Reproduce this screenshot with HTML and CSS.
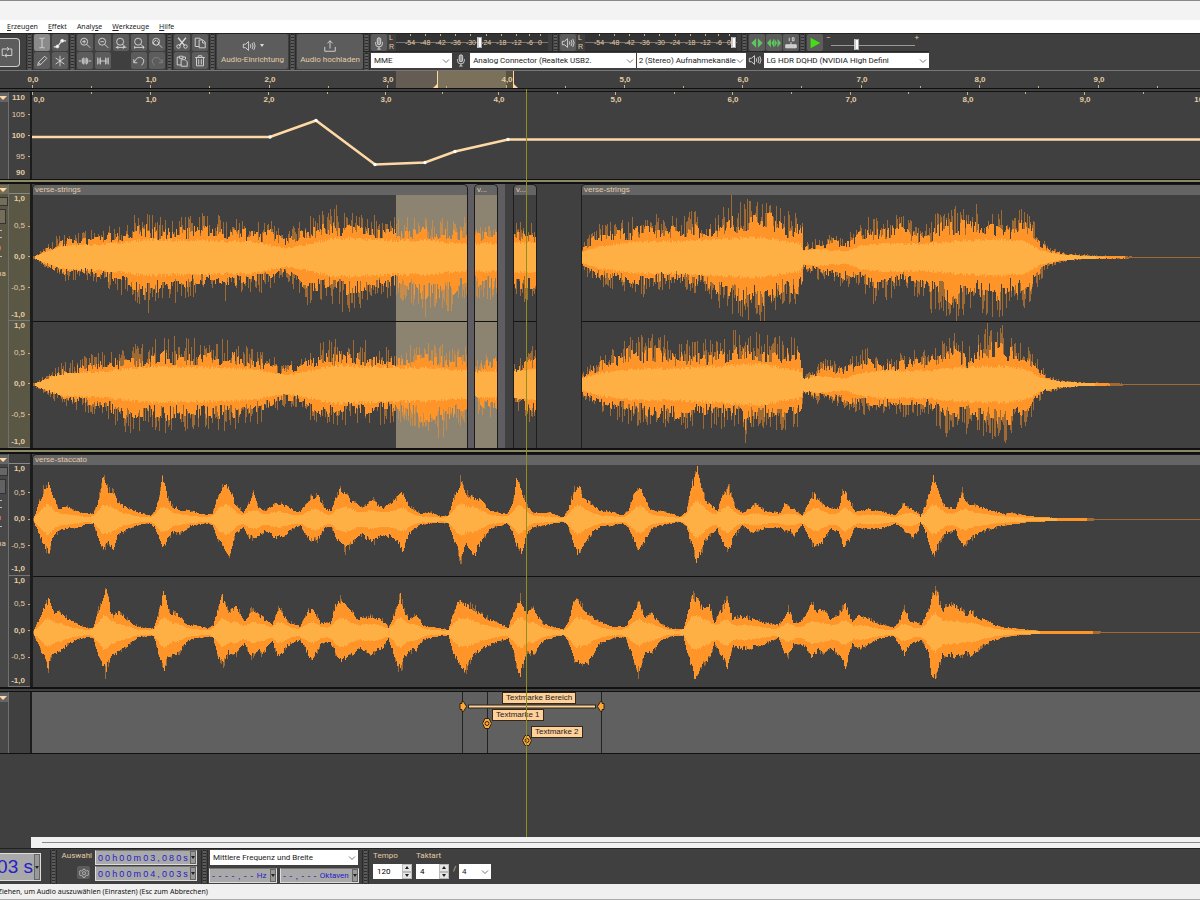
FILE: index.html
```html
<!DOCTYPE html>
<html lang="de">
<head>
<meta charset="utf-8">
<title>Audio-Editor</title>
<link rel="stylesheet" href="styles.css">
</head>
<body>
<svg class="symbols" aria-hidden="true">
  <symbol id="mic" viewBox="0 0 16 16"><rect x="6" y="2" width="4" height="8" rx="2" fill="#999"/><path d="M4 7v1.500a4 4 0 0 0 8 0V7M8 12.500V15M6 15h4"/></symbol>
  <symbol id="speaker" viewBox="0 0 16 16"><path d="M1.500 6h2.500l3.500-3v10l-3.500-3H1.500zM9.500 6q1.300 2 0 4M11.500 4.500q2.300 3.500 0 7M13.500 3.500q3 4.500 0 9"/></symbol>
  <symbol id="chevron" viewBox="0 0 8 8"><path d="M1 2.500 4 5.500 7 2.500"/></symbol>
  <symbol id="zoom" viewBox="0 0 16 16"><circle cx="7" cy="6.500" r="4"/><path d="m10 9.500 4 4"/></symbol>
</svg>
<header class="titlebar"></header>
<nav class="menu">
  <a href="#"><u>E</u>rzeugen</a><a href="#"><u>E</u>ffekt</a><a href="#">Analy<u>s</u>e</a><a href="#"><u>W</u>erkzeuge</a><a href="#"><u>H</u>ilfe</a>
</nav>

<section class="toolbar" aria-label="Werkzeugleisten">
  <div class="loopbox"><button class="loop" aria-label="Schleife"><svg viewBox="0 0 16 16"><path d="M5 12H2.500V4.500H10M8 2.500l2.500 2L8 6.500M11 4.500h2.500V12H6M8 10l-2.500 2L8 14"/></svg></button></div>
  <i class="grip"></i>
  <div class="tools">
    <button class="on" aria-label="Auswahl"><svg viewBox="0 0 16 16"><path d="M5 2.500h2l1 1 1-1h2M8 3.500v9M5 13.500h2l1-1 1 1h2"/></svg></button>
    <button aria-label="Hüllkurve"><svg viewBox="0 0 16 16"><path d="M1 12.500h4l5-7h5" stroke-width="1.500"/><circle cx="5" cy="12" r="1.700" fill="#fff"/><circle cx="10.500" cy="5.500" r="1.700" fill="#fff"/></svg></button>
    <button aria-label="Zeichnen"><svg viewBox="0 0 16 16"><path d="m3 13 1-3.500L11 2.500l2.500 2.500-7 7zM4 9.500 6.500 12"/></svg></button>
    <button aria-label="Multi"><svg viewBox="0 0 16 16"><path d="M8 2v12M3 4.500l10 7M13 4.500l-10 7"/></svg></button>
  </div>
  <i class="grip"></i>
  <div class="edit">
    <button aria-label="Vergrößern"><svg><use href="#zoom"/></svg><svg class="mark" viewBox="0 0 16 16"><path d="M5 6.500h4M7 4.500v4"/></svg></button>
    <button aria-label="Verkleinern"><svg><use href="#zoom"/></svg><svg class="mark" viewBox="0 0 16 16"><path d="M5 6.500h4"/></svg></button>
    <button aria-label="Auswahl anpassen"><svg><use href="#zoom"/></svg><svg class="mark" viewBox="0 0 16 16"><path d="M2 13h11M5 11.500 3 13l2 1.500M10 11.500l2 1.500-2 1.500"/></svg></button>
    <button aria-label="Projekt anpassen"><svg><use href="#zoom"/></svg><svg class="mark" viewBox="0 0 16 16"><path d="M3 13h10M3 11.500v3M13 11.500v3"/></svg></button>
    <button aria-label="Zoom umschalten"><svg><use href="#zoom"/></svg><svg class="mark" viewBox="0 0 16 16"><path d="M7 4.500 3 8l3 2M8 5l2 3-2 3"/></svg></button>
    <button aria-label="Zuschneiden"><svg viewBox="0 0 16 16"><path d="M1 8h3M5 5v6M6.500 4v8M8 5v6M9.500 4v8M11 5v6M12 8h3"/></svg></button>
    <button aria-label="Stille"><svg viewBox="0 0 16 16"><path d="M2 4v8M3.500 5v6M5 4v8M5 8h6M11 4v8M12.500 5v6M14 4v8"/></svg></button>
    <span></span>
    <button aria-label="Rückgängig"><svg viewBox="0 0 16 16"><path d="M2 6v4h4M2.500 9.500Q6 2 11 4.500T11 13"/></svg></button>
    <button aria-label="Wiederholen" disabled><svg viewBox="0 0 16 16"><path d="M14 6v4h-4M13.500 9.500Q10 2 5 4.500T5 13"/></svg></button>
  </div>
  <i class="grip"></i>
  <div class="tools">
    <button aria-label="Ausschneiden"><svg viewBox="0 0 16 16"><path d="M3.500 2 11 11M12.500 2 5 11" stroke-width="1.500"/><circle cx="4" cy="12" r="2"/><circle cx="12" cy="12" r="2"/></svg></button>
    <button aria-label="Kopieren"><svg viewBox="0 0 16 16"><path d="M7 12H2.500V2.500H8l2 2M7 4.500h4.500l2.500 2.500v6.500H7zM11 5v3h3"/></svg></button>
    <button aria-label="Einfügen"><svg viewBox="0 0 16 16"><path d="M7 12.500H2.500v-9H5M9 3.500h3V6M5 2.500h4v2.500H5zM7 6.500h4.500L14 9v5H7z"/></svg></button>
    <button aria-label="Löschen"><svg viewBox="0 0 16 16"><path d="M2.500 4h11M6 3.500V2h4v1.500M4 4v9.500h8V4M6.500 6v6M9.500 6v6"/></svg></button>
  </div>
  <i class="grip"></i>
  <button class="big setup"><span class="bigicon"><svg><use href="#speaker"/></svg><b class="tri"></b></span>Audio-Einrichtung</button>
  <i class="grip"></i>
  <button class="big upload"><span class="bigicon"><svg viewBox="0 0 16 16"><path d="M2 9v5h12V9M8 11V2M5 5l3-3 3 3"/></svg></span>Audio hochladen</button>
  <div class="stack">
    <div class="line">
      <i class="grip"></i>
      <button aria-label="Aufnahmepegel"><svg><use href="#mic"/></svg></button>
      <div class="lr"><span>L</span><span>R</span></div>
      <div class="meter"><span>-54</span><span>-48</span><span>-42</span><span>-36</span><span>-30</span><span>-24</span><span>-18</span><span>-12</span><span>-6</span><span>0</span><input type="range" aria-label="Aufnahmelautstärke" min="0" max="100" value="55"></div>
      <i class="grip"></i>
      <button aria-label="Wiedergabepegel"><svg><use href="#speaker"/></svg></button>
      <div class="lr"><span>L</span><span>R</span></div>
      <div class="meter"><span>-54</span><span>-48</span><span>-42</span><span>-36</span><span>-30</span><span>-24</span><span>-18</span><span>-12</span><span>-6</span><span>0</span><input type="range" aria-label="Wiedergabelautstärke" min="0" max="100" value="99"></div>
      <i class="grip"></i>
      <div class="sync">
        <button aria-label="Clip strecken"><svg class="green" viewBox="0 0 16 16"><path d="M7 2.500v11L1.500 8zM9 2.500v11L14.500 8z"/></svg></button>
        <button aria-label="Tonhöhe"><svg class="green" viewBox="0 0 16 16"><path d="M4.500 3v10L0 8zM8 3v10L5 8zM8.500 3v10l3-5zM12 3v10l4-5z"/></svg></button>
        <button aria-label="Synchronisieren"><svg viewBox="0 0 16 16"><path d="M6 2v4M9.500 2h2v3.500h-2zM8 7v3"/><path d="M2 10h12v3.500H2z" fill="#ccc"/></svg></button>
      </div>
      <i class="grip"></i>
      <button aria-label="Abspielen"><svg class="play" viewBox="0 0 16 16"><path d="M3 2 14 8 3 14z"/></svg></button>
      <div class="speed"><span>−</span><input type="range" aria-label="Geschwindigkeit" min="0" max="100" value="30"><span>+</span></div>
    </div>
    <div class="line devices">
      <i class="grip"></i>
      <label class="combo host"><select aria-label="Audio-Host"><option>MME</option></select><svg><use href="#chevron"/></svg></label>
      <svg class="dev"><use href="#mic"/></svg>
      <label class="combo input"><select aria-label="Aufnahmegerät"><option>Analog Connector (Realtek USB2.</option></select><svg><use href="#chevron"/></svg></label>
      <label class="combo chan"><select aria-label="Aufnahmekanäle"><option>2 (Stereo) Aufnahmekanäle</option></select><svg><use href="#chevron"/></svg></label>
      <svg class="dev spk"><use href="#speaker"/></svg>
      <label class="combo output"><select aria-label="Wiedergabegerät"><option>LG HDR DQHD (NVIDIA High Defini</option></select><svg><use href="#chevron"/></svg></label>
    </div>
  </div>
</section>

<svg class="timeline" id="timeline"></svg>

<main class="tracks">
  <section class="track tempo">
    <div class="panel"><button class="drop" aria-label="Spurmenü"></button></div>
    <div class="ruler"><div class="scale"><b>110</b><span>105</span><b>100</b><span>95</span><b>90</b></div></div>
    <div class="lane"><svg class="fill" id="tempo"></svg></div>
  </section>
  <section class="track strings">
    <div class="panel"><button class="drop" aria-label="Spurmenü"></button><i class="bar"></i><i class="box"></i><i class="dash"></i><i class="dash"></i><i class="dot"></i><i class="dash"></i><span>na</span></div>
    <div class="ruler"><div class="head"></div>
      <div class="scale"><b>1,0</b><span>0,5</span><b>0,0</b><span>-0,5</span><b>-1,0</b></div>
      <div class="scale"><b>1,0</b><span>0,5</span><b>0,0</b><span>-0,5</span><b>-1,0</b></div></div>
    <div class="lane" id="strings"></div>
  </section>
  <section class="track staccato">
    <div class="panel"><button class="drop" aria-label="Spurmenü"></button><i class="bar"></i><i class="box"></i><i class="dash"></i><i class="dash"></i><i class="dot"></i><i class="dash"></i><span>na</span></div>
    <div class="ruler"><div class="head"></div>
      <div class="scale"><b>1,0</b><span>0,5</span><b>0,0</b><span>-0,5</span><b>-1,0</b></div>
      <div class="scale"><b>1,0</b><span>0,5</span><b>0,0</b><span>-0,5</span><b>-1,0</b></div></div>
    <div class="lane" id="staccato"></div>
  </section>
  <section class="track labels">
    <div class="panel"><button class="drop" aria-label="Spurmenü"></button></div>
    <div class="ruler"></div>
    <div class="lane">
      <svg class="fill">
        <path d="M430.500 0v62M455.500 0v62M569.500 0v62" stroke="#222"/>
        <path d="M436 14.500H564" stroke="#2a221a" stroke-width="4"/><path d="M437 14.500H563" stroke="#ffd298" stroke-width="2"/>
        <g fill="#ffa838" stroke="#33220f">
          <path d="M430 9.500h1.500l3 5-3 5H430v-2h-2v-6h2z"/><path d="M570 9.500h-1.500l-3 5 3 5h1.500v-2h2v-6h-2z"/>
          <path d="M453 26.500h4l2.500 5-2.500 5h-4l-2.500-5z"/><circle cx="455" cy="31.500" r="2"/>
          <path d="M493 43.500h4l2.500 5-2.500 5h-4l-2.500-5z"/><circle cx="495" cy="48.500" r="2"/>
        </g>
      </svg>
      <span class="tag t1">Textmarke Bereich</span><span class="tag t2">Textmarke 1</span><span class="tag t3">Textmarke 2</span>
    </div>
  </section>
  <i class="playhead"></i>
</main>

<div class="scroll"><i></i></div>

<footer class="bottom">
  <div class="clock">03 s<button class="tiny" aria-label="Zeitformat"><b class="tri"></b></button></div>
  <i class="grip"></i>
  <div class="sel"><span>Auswahl</span><button aria-label="Auswahloptionen"><svg viewBox="0 0 16 16"><path d="M6.500 2h3l.7 2 2 .9 2-.9 1.300 2.700L14 8l1.500 1.500-1.500 2.700-2-.4-1.800 1L9.500 15h-3l-.7-2.200-1.800-1-2 .4L.5 9.500 2 8 .5 6.500 2 3.900l2 1 1.800-.9z"/><circle cx="8" cy="8.300" r="2.500"/></svg></button></div>
  <div class="times">
    <div class="digits" data-text="00h00m03,080s"></div>
    <div class="digits" data-text="00h00m04,003s"></div>
  </div>
  <i class="grip"></i>
  <div class="freq">
    <label class="combo"><select aria-label="Spektralauswahl"><option>Mittlere Frequenz und Breite</option></select><svg><use href="#chevron"/></svg></label>
    <div class="pair">
      <div class="digits dim"><span>-</span><span>-</span><span>-</span><span>-</span><span>,</span><span>-</span><span>-</span><em>Hz</em><button class="tiny" aria-label="Format"><b class="tri"></b></button></div>
      <div class="digits dim"><span>-</span><span>-</span><span>,</span><span>-</span><span>-</span><span>-</span><em>Oktaven</em><button class="tiny" aria-label="Format"><b class="tri"></b></button></div>
    </div>
  </div>
  <i class="grip"></i>
  <div class="meterset">
    <label for="bpm">Tempo</label><label for="beats">Taktart</label><span></span><span></span>
    <div class="num"><input id="bpm" value="120"><span><button aria-label="mehr"><b class="tri up"></b></button><button aria-label="weniger"><b class="tri"></b></button></span></div>
    <div class="num"><input id="beats" value="4"><span><button aria-label="mehr"><b class="tri up"></b></button><button aria-label="weniger"><b class="tri"></b></button></span></div>
    <em>/</em>
    <label class="combo unit"><select aria-label="Notenwert"><option>4</option></select><svg><use href="#chevron"/></svg></label>
  </div>
</footer>
<div class="status"><p>Ziehen, um Audio auszuwählen (Einrasten) (Esc zum Abbrechen)</p></div>
<script src="app.js"></script>
</body>
</html>
```
FILE: styles.css
```css
* { box-sizing: border-box; }
body { margin: 0; min-height: 100vh; display: flex; flex-direction: column; background: #404040; font: 8px/10px Roboto, "Noto Sans", sans-serif; color: #111; overflow: hidden; }
button, input, select { font: inherit; margin: 0; padding: 0; border: 0; border-radius: 0; }
i, em { font-style: normal; }
svg { fill: none; stroke: #ddd; stroke-width: 1; display: block; }
.symbols { position: absolute; width: 0; height: 0; }
.titlebar { height: 20px; background: #f3f3f3; border-top: 1px solid #888; }
.menu { height: 13px; background: #fff; display: flex; gap: 10px; padding: 2px 7px; font: 7px/10px "Noto Sans", sans-serif; }
.menu a { color: #222; text-decoration: none; }

.toolbar { height: 37px; background: #3f3f3f; border-top: 1px solid #222; display: flex; overflow: hidden; }
.grip { flex: none; width: 7px; margin: 0 1px; border: solid #2b2b2b; border-width: 0 1px; background: repeating-linear-gradient(#2d2d2d 0 1px, #5b5b5b 1px 3px); box-shadow: inset 1px 0 #454545, inset -1px 0 #454545; }
.toolbar button { width: 16px; height: 17px; background: #5c5c5c; border-radius: 2px; display: grid; place-items: center; color: #e5cba4; }
.toolbar button svg { width: 14px; height: 14px; grid-area: 1 / 1; }
.toolbar .on { background: #8a8a8a; }
.loopbox { width: 25px; display: flex; align-items: center; }
.toolbar .loop { width: 20px; height: 29px; border: 1px solid #ccc; border-left: 0; border-radius: 0 4px 4px 0; justify-content: start; }
.tools, .edit { display: grid; grid-template-columns: 16px 16px; gap: 1px 2px; align-content: start; }
.edit { grid-template-columns: repeat(5, 16px); width: 88px; }
.toolbar button:disabled svg { opacity: .3; }
.toolbar .big { height: 35px; width: 71px; display: flex; flex-direction: column; justify-content: center; align-items: center; gap: 2px; }
.toolbar .upload { width: 66px; }
.bigicon { display: flex; align-items: center; gap: 4px; }
.tri { width: 0; height: 0; border: 2px solid transparent; border-top: 3px solid #ddd; border-bottom: 0; }
.stack { flex: 1; display: flex; flex-direction: column; }
.stack .grip { margin-left: 0; }
.line { height: 18px; display: flex; width: 566px; border-bottom: 1px solid #262626; }
.lr { width: 7px; margin-left: 2px; font: 7px/8px "Liberation Sans", sans-serif; color: #e5cba4; display: grid; }
.meter { position: relative; width: 152px; padding: 0 6px 0 9px; margin-right: 4px; display: flex; justify-content: space-between; align-items: center; background: linear-gradient(#777, #777) 0 8px / 100% 1px no-repeat, #343434; font: 7px/8px "Liberation Sans", sans-serif; color: #e5cba4; }
.meter span { background: linear-gradient(#c9b08c, #c9b08c) 50% 0 / 1px 2px no-repeat; line-height: 17px; }
input[type=range] { appearance: none; background: none; }
.meter input { position: absolute; left: 0; top: 3px; width: 100%; height: 11px; }
input[type=range]::-webkit-slider-thumb { appearance: none; width: 5px; height: 11px; background: #fff; border: 1px solid #aaa; border-left: 2px solid #ccc; }
.sync { display: flex; gap: 1px; }
.green { fill: #5fc55f; stroke: none; }
.play { fill: #45dd18; stroke: none; }
.speed { display: flex; margin-left: 3px; color: #e5cba4; line-height: 8px; }
.speed input { width: 84px; height: 15px; margin-top: 3px; background: linear-gradient(#999, #999) 0 8px / 100% 1px no-repeat; }
.combo { position: relative; display: block; height: 15px; background: #fff; }
.combo select { appearance: none; width: 100%; height: 100%; padding: 0 3px; background: none; color: #222; }
.combo svg { position: absolute; right: 2px; top: 4px; width: 8px; height: 8px; stroke: #777; pointer-events: none; }
.devices { padding-top: 1px; border: 0; align-items: start; }
.devices .grip { align-self: stretch; }
.host { width: 82px; }
.dev { width: 14px; height: 14px; margin: 0 2px; }
.input { width: 167px; margin-right: 1px; }
.chan { width: 110px; }
.chan select { padding: 0 2px; }
.output { width: 167px; }

.timeline { width: 100%; height: 19px; flex: none; background: #404040; border-top: 1px solid #777; border-bottom: 1px solid #111; }
svg text { stroke: none; fill: #e5cba4; font: bold 8px "Liberation Sans", sans-serif; text-anchor: middle; }
.tracks { position: relative; flex: 1; padding-top: 2px; background: #404040; overflow: hidden; }
.track { display: grid; grid-template-columns: 8px 24px 1fr; border-top: 1px solid #111; border-bottom: 2px solid #111; }
.panel { display: flex; flex-direction: column; background: #484848; overflow: hidden; color: #e5cba4; }
.drop { height: 9px; margin: 1px 0 3px; background: #656565; position: relative; }
.drop::after { content: ""; position: absolute; left: -1px; top: 3px; border: 4px solid transparent; border-top-color: #ffd9a5; border-bottom: 0; }
.bar { height: 9px; background: #666; border: 1px solid #333; border-left: 0; }
.box { height: 15px; margin-top: 3px; width: 6px; background: #626262; border: 1px solid #333; border-left: 0; }
.dash { width: 2px; height: 1px; background: #bbb; margin-top: 6px; }
.dot { width: 1px; height: 4px; background: #c65; margin-top: 8px; }
.panel span { margin: 12px 0 0 -3px; }
.ruler { display: flex; flex-direction: column; background: #404040; border-left: 1px solid #707070; border-right: 2px solid #1c1c1c; color: #e5cba4; font: 8px/10px "Liberation Sans", sans-serif; text-align: right; }
.head { height: 10px; border-bottom: 1px solid #888; }
.scale { flex: 1; display: grid; grid-template-rows: 10px 5fr 2fr 5fr 10px; align-items: center; border-bottom: 1px solid #777; }
.scale > * { padding-right: 5px; background: linear-gradient(#c9b08c, #c9b08c) 100% 50% / 2px 1px no-repeat; }
.scale > :first-child, .scale > :last-child { background: none; }
.lane { position: relative; overflow: hidden; background: #404040; }
.fill { width: 100%; height: 100%; }
.tempo { height: 89px; }
.tempo .scale { grid-template-rows: 12px 21px 21px 21px 12px; border: 0; }
.strings { height: 272px; border-top: 2px solid #8c8a65; border-bottom: 2px solid #8c8a65; background: #111; padding: 2px 0; }
.strings .panel, .strings .ruler { background: #5b5745; }
.strings .bar, .strings .box, .strings .drop { background: #746d5a; }
.staccato { height: 237px; border-top-width: 2px; }
.labels { height: 63px; margin-top: 2px; border-bottom-width: 1px; }
.labels .lane { background: #606060; }
.clip { position: absolute; top: 0; bottom: 0; border: 1px solid #1d1d1d; border-bottom: 0; border-radius: 5px 5px 0 0; background: #404040; display: flex; flex-direction: column; overflow: hidden; }
.clip h3 { margin: 0; padding-left: 2px; height: 10px; background: #656565; color: #e0c9a8; font: 8px/9px "Liberation Sans", sans-serif; white-space: nowrap; }
.clip svg { flex: 1; width: 100%; min-height: 0; position: relative; }
.clip svg + svg { border-top: 1px solid #111; }
.peak { stroke: #ff9428; stroke-opacity: .5; }
.body { stroke: #ff9428; }
.rms { stroke: #ffb045; }
.shade { position: absolute; top: 0; bottom: 0; background: #5f5d62; }
.clip .shade { top: 10px; background: #8c8470; }
.tag { position: absolute; padding: 0 3px; border: 1px solid #33281c; background: #ffd098; color: #222; font: 8px/10px "Liberation Sans", sans-serif; white-space: nowrap; }
.t1 { left: 470px; top: 0; }
.t2 { left: 460px; top: 17px; }
.t3 { left: 499px; top: 34px; }
.playhead { position: absolute; left: 526px; top: 0; bottom: 0; width: 1px; background: #8f8f20; }

.scroll { height: 11px; margin-left: 31px; padding: 5px 0 0 11px; background: #f1f1f1; }
.scroll i { display: block; height: 1px; background: #888; }
.bottom { height: 36px; display: flex; padding-top: 1px; background: #404040; border-top: 1px solid #222; color: #e5cba4; }
.clock { width: 41px; height: 28px; margin: 3px 8px 0 0; display: flex; justify-content: flex-end; align-items: center; gap: 1px; background: #a9a9a9; border: 1px solid #ddd; border-left: 0; color: #2520c8; font: 19px/26px "Liberation Sans", sans-serif; white-space: nowrap; }
.tiny { width: 6px; align-self: stretch; background: #999; border: 1px solid #666; display: grid; place-items: center; }
.tiny .tri, .num .tri { border-top-color: #222; }
.num .tri.up { border-top: 0; border-bottom: 3px solid #222; }
.sel { width: 34px; display: flex; flex-direction: column; align-items: flex-end; gap: 5px; margin-right: 3px; padding-top: 1px; white-space: nowrap; }
.sel button { width: 13px; height: 13px; margin-right: 2px; background: #5c5c5c; border-radius: 2px; display: grid; place-items: center; }
.sel svg { width: 10px; height: 10px; }
.times { display: grid; gap: 1px; margin-right: 3px; align-content: start; }
.digits { width: 102px; height: 15px; display: flex; align-items: center; justify-content: space-between; padding-left: 2px; background: #a9a9a9; border: 1px solid #ddd; border-top-color: #777; color: #2520c8; font: 9px/12px "Liberation Sans", sans-serif; }
.freq { width: 150px; display: grid; gap: 3px; align-content: start; margin-right: 2px; }
.freq .combo { margin: 0 1px; }
.pair { display: flex; gap: 3px; }
.pair .digits { width: 68px; }
.pair .digits + .digits { width: 79px; }
.digits em { font: 8px/12px Roboto, sans-serif; }
.meterset { display: grid; grid-template-columns: 39px 33px 2px 32px; column-gap: 4px; row-gap: 2px; align-content: start; padding-left: 3px; }
.meterset > label:not(.combo) { line-height: 12px; }
.num { display: flex; height: 15px; background: #fff; }
.num input { min-width: 0; flex: 1; padding-left: 4px; }
.num span { display: grid; width: 10px; }
.num button { display: grid; place-items: center; background: #e6e6e6; border: 1px solid #bbb; }
.status { height: 16px; padding: 3px 0; background: #f0f0f0; border-bottom: 1px solid #aaa; font: 7px/10px "Noto Sans", sans-serif; }
.status p { margin: 0 0 0 -2px; }
```
FILE: app.js
```js
const ORIGIN = 32;
const WIDTH = Math.max(document.documentElement.clientWidth, 700) + 8;
let seed = 7;
const rnd = () => (seed = (seed * 16807) % 2147483647) / 2147483647;

// "x,up,down x,up,down ..." -> envelope points
const parse = s => s.trim().split(/\s+/).map(p => p.split(',').map(Number));
function at(points, x) {
  if (x <= points[0][0]) return points[0];
  for (let i = 1; i < points.length; i++) {
    if (x <= points[i][0]) {
      const a = points[i - 1], b = points[i], t = (x - a[0]) / (b[0] - a[0]);
      return a.map((v, k) => v + (b[k] - v) * t);
    }
  }
  return points[points.length - 1];
}
// mean level of the envelope around x
function mean(points, x, reach) {
  let sum = 0;
  for (let k = -reach; k <= reach; k++) {
    const p = at(points, x + k);
    sum += (p[1] + p[2]) / 2;
  }
  return sum / (2 * reach + 1);
}

function wave(data, start, end, mid, smooth, rmsData) {
  const pts = parse(data), rpts = rmsData && parse(rmsData);
  let peak = '', body = '', rms = '', du = .5, dd = .5;
  const bar = (i, u, d) => `M${i + .5} ${Math.round(mid - u)}V${Math.round(mid + d + 1)}`;
  for (let x = start; x < end; x++) {
    const [, u, d] = at(pts, x), i = x - start;
    if (rnd() < .7) du = rnd();
    if (rnd() < .7) dd = rnd();
    const low = smooth ? .74 : .45, spread = smooth ? .22 : .34;
    const bu = u * (low + spread * du), bd = d * (low + spread * dd);
    const lift = () => rnd() < (smooth ? .35 : .55) ? rnd() * 1.25 : 0;
    const pu = bu + (u - bu) * lift(), pd = bd + (d - bd) * lift();
    const level = rpts ? at(rpts, x)[1] * 1.1 : mean(pts, x, 4) * .4;
    const r = level * (.9 + .2 * rnd());
    peak += bar(i, pu, pd);
    if (u > 1) body += bar(i, bu, bd);
    if (u > 1.5) rms += bar(i, Math.min(r, bu), Math.min(r, bd));
  }
  return `<svg><path class="peak" d="${peak}"/><path class="body" d="${body}"/><path class="rms" d="${rms}"/></svg>`;
}

const rmsStrings = '35,1 62,10 100,11 148,16 200,15 250,14 285,8 310,12 334,17 400,15 425,15 466,12 475,12 536,13 582,5 600,10 640,14 680,14 730,17 760,18 800,12 803,6 820,7 845,5 860,10 880,12 930,12 960,15 1000,16 1025,14 1040,6 1060,2 1090,1 1100,0';
const s1 = '34,1,1 47,12,11 62,24,22 80,24,20 100,28,26 120,34,36 148,44,50 155,38,48 170,37,42 200,42,34 225,38,40 250,36,32 262,32,32 270,35,30 285,24,18 303,36,46 334,48,42 345,42,50 370,38,42 395,38,36 425,38,56 450,38,50 466,36,38 475,33,38 497,33,40 514,33,38 536,33,42 582,12,12 590,24,22 600,32,27 620,36,30 640,40,36 660,38,30 678,40,28 695,44,36 705,34,34 720,42,52 731,60,50 736,52,62 755,54,55 759,50,64 770,58,56 785,42,42 797,42,48 802,38,30 803,14,12 815,16,18 833,24,26 845,18,28 858,32,26 870,38,42 885,36,42 900,43,30 918,30,38 930,32,52 938,44,46 951,48,64 972,50,47 985,48,52 1000,46,58 1010,36,44 1021,48,50 1030,42,42 1040,20,20 1050,9,8 1065,4,4 1080,3,2 1100,1.6,1 1125,1,1 1140,0,0';
const s2 = '34,1,1 62,20,20 100,30,30 125,34,44 148,38,42 163,44,46 200,40,42 230,42,44 265,30,32 280,22,20 300,28,22 320,38,44 340,42,38 370,38,40 400,34,34 425,38,50 450,36,46 466,34,36 475,20,24 497,40,40 514,20,24 536,40,40 582,12,12 600,30,27 628,46,36 665,46,44 675,40,46 695,40,40 720,44,40 737,52,42 745,50,60 752,52,44 770,46,42 795,46,44 801,36,32 803,8,9 815,15,18 822,26,15 840,20,22 865,34,28 885,26,30 905,32,30 930,36,30 945,40,47 953,50,46 968,34,44 980,54,47 1000,58,52 1010,48,52 1020,40,42 1026,38,44 1035,26,20 1045,12,9 1060,4,4 1080,2,1.6 1110,1,1 1140,0,0';
const t1 = '33,1,1 43,33,28 48,44,38 53,25,20 58,13,13 68,14,9 75,9,10 85,6,5 93,6,4 98,22,20 103,48,34 108,32,26 113,30,36 118,18,17 128,12,10 140,7,5 150,4,4 154,8,8 158,22,20 162,46,34 166,30,24 172,14,14 180,11,15 190,9,7 205,5,4 212,6,5 218,27,24 222,40,28 229,36,38 235,16,16 243,8,8 249,19,20 253,29,21 258,14,20 265,10,12 275,17,20 283,17,18 290,12,12 300,8,6 310,25,24 318,26,22 325,12,8 331,10,8 339,34,28 345,28,34 353,20,24 362,14,17 372,22,26 383,12,17 393,20,20 403,31,36 408,15,17 420,6,5 430,8,4 440,3,3 448,4,4 453,22,22 460,45,45 466,28,30 475,25,38 482,20,22 490,9,10 507,6,4 513,22,16 516,45,28 521,33,36 527,16,16 533,7,8 550,7,5 563,2,2 568,12,8 577,43,40 583,24,28 592,17,15 600,10,8 612,8,6 622,4,4 628,10,8 631,21,19 640,40,35 645,22,22 651,10,10 665,8,5 680,3,2 686,8,8 692,40,32 697,56,50 701,35,34 706,20,22 712,15,15 717,10,10 722,26,28 728,36,34 735,13,17 742,7,6 750,13,14 755,17,13 765,9,9 780,7,8 784,18,13 790,12,12 794,11,18 802,4,4 808,20,21 814,28,30 822,17,25 830,12,10 838,13,13 843,33,30 849,22,23 855,8,8 868,12,10 880,9,10 895,4,4 903,17,11 912,11,20 918,7,12 920,3,2 926,18,16 933,47,40 938,30,30 945,13,15 955,12,12 962,31,28 968,18,24 978,14,15 990,10,10 1005,6,6 1012,7,5 1025,4,3 1040,2,2 1060,1.4,1 1087,1,1 1100,0,0';
const t2 = '33,1,1 42,23,23 48,38,42 52,24,22 58,23,24 68,15,13 78,8,7 88,4,5 93,6,6 98,26,26 105,53,44 110,26,28 113,17,28 118,23,21 128,13,14 138,6,5 153,4,3 158,20,22 164,48,42 168,24,26 178,19,23 188,7,9 195,8,6 208,4,4 213,8,6 218,27,29 222,41,38 228,22,23 236,29,23 244,12,12 251,25,27 258,20,18 262,17,25 272,8,10 279,29,30 287,12,14 300,6,8 308,25,25 313,26,30 320,11,13 330,10,10 338,41,31 348,26,28 358,15,17 370,18,23 382,14,18 388,5,6 395,23,30 400,41,44 405,22,26 408,15,22 416,21,19 423,7,8 440,4,3 448,3,3 453,21,23 459,37,34 463,30,46 471,30,30 483,18,16 500,9,9 508,5,6 513,23,23 520,40,50 526,20,22 533,26,24 543,9,9 563,3,2 568,12,10 575,39,36 580,31,34 587,22,36 598,12,13 612,6,6 625,6,5 631,17,23 638,34,44 645,17,22 652,21,21 660,9,10 670,4,4 683,3,3 688,23,29 692,44,40 695,38,58 702,28,34 709,30,30 714,12,12 720,23,23 727,37,40 732,15,15 740,18,18 752,15,17 765,10,12 778,8,5 785,19,24 788,27,25 793,12,13 800,12,13 805,17,15 811,31,30 818,25,19 823,26,22 830,14,16 840,22,26 845,31,39 852,11,13 859,19,17 870,14,12 880,9,6 893,5,3 899,13,13 904,28,24 910,12,12 915,12,11 921,8,8 928,27,23 933,49,58 937,44,46 942,26,26 950,30,26 960,28,26 966,19,22 970,24,28 980,15,17 990,11,10 1000,6,6 1015,4,3 1040,1.4,1 1093,1,1 1110,0,0';

function clip(name, start, end, channels, sel) {
  const shade = sel ? `<i class="shade" style="left:${sel[0] - start - 1}px;width:${sel[1] - sel[0]}px"></i>` : '';
  return `<div class="clip" style="left:${start - ORIGIN}px;width:${end - start + 1}px">${shade}<h3>${name}</h3>${channels}</div>`;
}
const strings = (name, a, b, sel) => clip(name, a, b, wave(s1, a + 1, b, 62, false, rmsStrings) + wave(s2, a + 1, b, 62, false, rmsStrings), sel);
document.getElementById('strings').innerHTML =
  '<i class="shade" style="left:364px;width:109px"></i>' +
  strings('verse-strings', 32, 467, [396, 467]) +
  strings('v...', 474, 497, [474, 497]) +
  strings('v...', 513, 536) +
  strings('verse-strings', 581, WIDTH);
document.getElementById('staccato').innerHTML =
  clip('verse-staccato', 32, WIDTH, wave(t1, 33, WIDTH, 54, true) + wave(t2, 33, WIDTH, 55, true));

function tickPath(x, y1, y2) {
  return `<path d="M${Math.round(x) + .5} ${y1}V${y2}" stroke="#c9b08c"/>`;
}
function label(x, y, n) {
  return `<text x="${Math.round(x)}" y="${y}">${n},0</text>`;
}
let timeMarks = '';
for (let i = 0, x = 32; x < WIDTH - 12; i++, x += 118.4) {
  timeMarks += tickPath(x, 14, 17) + tickPath(x + 59, 15, 17) + label(x + 1, 11, i);
}
document.getElementById('timeline').innerHTML =
  '<path d="M396 0h42v17h-42z" fill="#655d54" stroke="none"/><path d="M438 0h68v17h-68z" fill="#7b7059" stroke="none"/><path d="M506 0h8v17h-8z" fill="#57513f" stroke="none"/>' +
  '<path d="M437.500 0v17M513.500 0v17" stroke="#ffd9a5"/><path d="M438 12v5h-5zM513 12v5h5z" fill="#ffd9a5" stroke="none"/>' + timeMarks;

// bar positions follow the tempo curve
const bars = [0, 118, 236, 353, 466];
while (bars[bars.length - 1] < WIDTH) bars.push(bars[bars.length - 1] + 117.2);
const points = [[238, 45], [284, 28.5], [343, 72.5], [393, 70.5], [423, 59.5], [476, 47.5]];
document.getElementById('tempo').innerHTML =
  bars.slice(0, -1).map((x, i) => tickPath(x, 0, 3) + tickPath((x + bars[i + 1]) / 2, 0, 2) +
    (x < WIDTH - ORIGIN ? label(i ? x + 1 : 7, 10, i) : '')).join('') +
  '<path d="M0 45H238L284 28.500L343 72.500L393 70.500L423 59.500L476 47.500H3000" stroke="#ffd9a5" stroke-width="2.500"/>' +
  points.map(p => `<circle cx="${p[0]}" cy="${p[1]}" r="1.700" fill="#fff" stroke="none"/>`).join('');

document.querySelectorAll('.digits[data-text]').forEach(d => {
  d.innerHTML = [...d.dataset.text].map(c => `<span>${c}</span>`).join('') +
    '<button class="tiny" aria-label="Format"><b class="tri"></b></button>';
});
```
